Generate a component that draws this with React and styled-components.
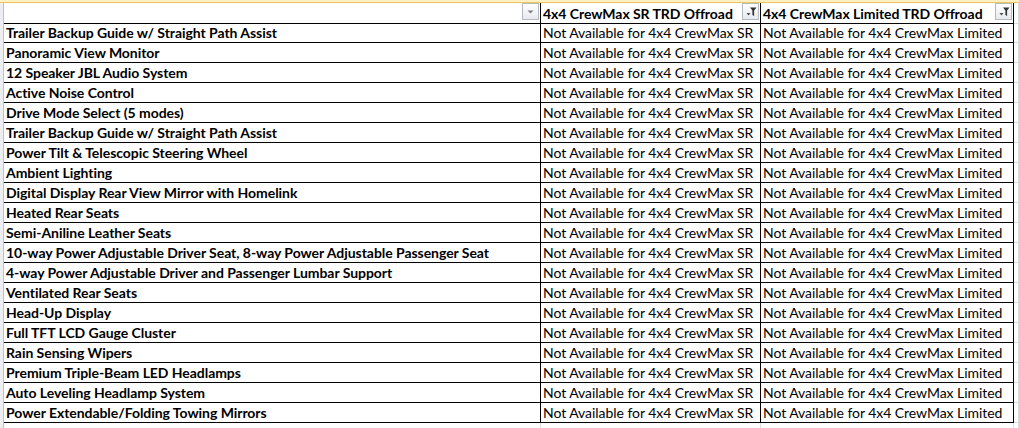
import React from "react";
import styled, { createGlobalStyle } from "styled-components";

const features = [
  "Trailer Backup Guide w/ Straight Path Assist",
  "Panoramic View Monitor",
  "12 Speaker JBL Audio System",
  "Active Noise Control",
  "Drive Mode Select (5 modes)",
  "Trailer Backup Guide w/ Straight Path Assist",
  "Power Tilt & Telescopic Steering Wheel",
  "Ambient Lighting",
  "Digital Display Rear View Mirror with Homelink",
  "Heated Rear Seats",
  "Semi-Aniline Leather Seats",
  "10-way Power Adjustable Driver Seat, 8-way Power Adjustable Passenger Seat",
  "4-way Power Adjustable Driver and Passenger Lumbar Support",
  "Ventilated Rear Seats",
  "Head-Up Display",
  "Full TFT LCD Gauge Cluster",
  "Rain Sensing Wipers",
  "Premium Triple-Beam LED Headlamps",
  "Auto Leveling Headlamp System",
  "Power Extendable/Folding Towing Mirrors"
];

const GlobalStyle = createGlobalStyle`
  html, body {
    margin: 0;
    padding: 0;
    background: #fff;
  }
  body {
    font-family: Lato, "Liberation Sans", sans-serif;
    color: #000;
  }
`;

const Page = styled.div`
  width: 1019px;
  height: 428px;
  overflow: hidden;
  background: #fff;
`;

// the selected column header edge peeking in at the top
const TopStrip = styled.div`
  height: 2px;
  background: #fcefc4;
  border-bottom: 1px solid #f0c557;
`;

const Body = styled.div`
  display: flex;
`;

const RowEdge = styled.div`
  width: 3px;
  flex: none;
  background: #eceef2;
  border-right: 1px solid #bcc1c8;
`;

const Sheet = styled.div`
  flex: 1;
  display: grid;
  grid-template-columns: 537px 220px 253px 1fr;
  grid-auto-rows: 20px;
`;

const Cell = styled.div`
  box-sizing: border-box;
  height: ${(p) => (p.$header ? 21 : 20)}px;
  border-right: 1px solid #000;
  border-bottom: 1px solid #000;
  padding: 0 0 0 2px;
  display: flex;
  align-items: center;
  justify-content: space-between;
  font-size: 14px;
  letter-spacing: -0.05px;
  font-weight: ${(p) => (p.$bold ? 700 : 400)};
  white-space: nowrap;
  overflow: hidden;
  line-height: 1;
`;

const Blank = styled.div`
  box-sizing: border-box;
  height: ${(p) => (p.$header ? 21 : 20)}px;
  border-right: 1px solid #dadcdd;
  border-bottom: 1px solid #dadcdd;
`;

const Label = styled.span`
  padding-top: 1px;
`;

const DropButton = styled.div`
  box-sizing: border-box;
  flex: none;
  width: 17px;
  height: 17px;
  margin-right: 1px;
  align-self: flex-start;
  border: 1px solid #b4b9c1;
  background: linear-gradient(#ffffff, #e7eaee);
  display: flex;
  align-items: center;
  justify-content: center;
`;

const Arrow = () => (
  <svg width="9" height="6" viewBox="0 0 9 6">
    <path d="M1.5 1.5h6L4.5 4.5z" fill="#7b7f86" />
  </svg>
);

const Funnel = () => (
  <svg width="15" height="15" viewBox="0 0 15 15">
    <path d="M3.5 9h4l-2 2.5z" fill="#4a4d52" />
    <path d="M7 3.5h6.5l-2.4 3v5.5l-1.7-1v-4.5z" fill="#2f3235" />
  </svg>
);

const headers = [
  { text: "", icon: <Arrow /> },
  { text: "4x4 CrewMax SR TRD Offroad", icon: <Funnel /> },
  { text: "4x4 CrewMax Limited TRD Offroad", icon: <Funnel /> }
];

export default function App() {
  return (
    <Page>
      <GlobalStyle />
      <TopStrip />
      <Body>
        <RowEdge />
        <Sheet>
          {headers.map((h, i) => (
            <Cell key={"h" + i} $header $bold>
              <Label>{h.text}</Label>
              <DropButton>{h.icon}</DropButton>
            </Cell>
          ))}
          <Blank $header />
          {features.map((f, i) => (
            <React.Fragment key={i}>
              <Cell $bold>
                <Label>{f}</Label>
              </Cell>
              <Cell>
                <Label>Not Available for 4x4 CrewMax SR</Label>
              </Cell>
              <Cell>
                <Label>Not Available for 4x4 CrewMax Limited</Label>
              </Cell>
              <Blank />
            </React.Fragment>
          ))}
          <Blank />
          <Blank />
          <Blank />
          <Blank />
        </Sheet>
      </Body>
    </Page>
  );
}
